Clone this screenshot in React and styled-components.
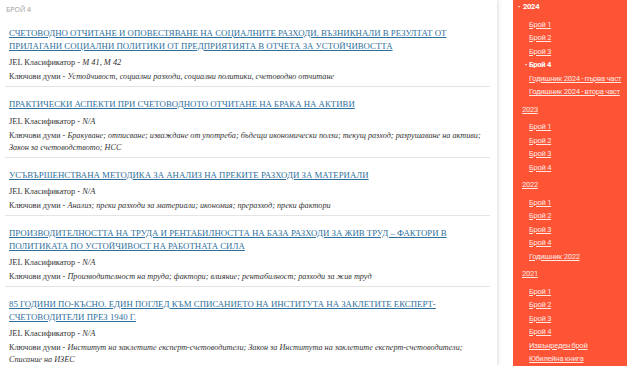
import styled, { createGlobalStyle } from 'styled-components';

const GlobalStyle = createGlobalStyle`
  html, body {
    margin: 0;
    padding: 0;
    background: #ffffff;
  }
`;

const articles = [
  {
    title:
      'Счетоводно отчитане и оповестяване на социалните разходи, възникнали в резултат от прилагани социални политики от предприятията в отчета за устойчивостта',
    jel: 'M 41, M 42',
    keywords: 'Устойчивост, социални разходи, социални политики, счетоводно отчитане',
  },
  {
    title: 'Практически аспекти при счетоводното отчитане на брака на активи',
    jel: 'N/A',
    keywords:
      'Бракуване; отписване; изваждане от употреба; бъдещи икономически ползи; текущ разход; разрушаване на активи; Закон за счетоводството; НСС',
  },
  {
    title: 'Усъвършенствана методика за анализ на преките разходи за материали',
    jel: 'N/A',
    keywords: 'Анализ; преки разходи за материали; икономия; преразход; преки фактори',
  },
  {
    title:
      'Производителността на труда и рентабилността на база разходи за жив труд – фактори в политиката по устойчивост на работната сила',
    jel: 'N/A',
    keywords: 'Производителност на труда; фактори; влияние; рентабилност; разходи за жив труд',
  },
  {
    title:
      '85 години по-късно. Един поглед към списанието на Института на заклетите експерт-счетоводители през 1940 г.',
    jel: 'N/A',
    keywords:
      'Институт на заклетите експерт-счетоводители; Закон за Института на заклетите експерт-счетоводители; Списание на ИЗЕС',
  },
];

const years = [
  {
    year: '2024',
    active: true,
    items: [
      { label: 'Брой 1' },
      { label: 'Брой 2' },
      { label: 'Брой 3' },
      { label: 'Брой 4', active: true },
      { label: 'Годишник 2024 - първа част' },
      { label: 'Годишник 2024 - втора част' },
    ],
  },
  {
    year: '2023',
    items: [{ label: 'Брой 1' }, { label: 'Брой 2' }, { label: 'Брой 3' }, { label: 'Брой 4' }],
  },
  {
    year: '2022',
    items: [
      { label: 'Брой 1' },
      { label: 'Брой 2' },
      { label: 'Брой 3' },
      { label: 'Брой 4' },
      { label: 'Годишник 2022' },
    ],
  },
  {
    year: '2021',
    items: [
      { label: 'Брой 1' },
      { label: 'Брой 2' },
      { label: 'Брой 3' },
      { label: 'Брой 4' },
      { label: 'Извънреден брой' },
      { label: 'Юбилейна книга' },
    ],
  },
];

const Page = styled.div`
  display: flex;
  width: 627px;
  height: 366px;
  overflow: hidden;
`;

const Main = styled.main`
  width: 513px;
  flex-shrink: 0;
`;

const Card = styled.div`
  width: 497px;
  height: 366px;
  box-shadow: 1px 0 4px rgba(0, 0, 0, 0.14);
  background: #fff;
`;

const IssueLabel = styled.div`
  font-family: 'Open Sans', sans-serif;
  font-size: 7px;
  color: #9a9a9a;
  text-transform: uppercase;
  padding: 5px 0 0 6px;
  line-height: 9px;
`;

const ArticleList = styled.div`
  padding-top: 13px;
`;

const Article = styled.article`
  margin: 0 7px 0 5px;
  padding: 11px 4px 3px 4px;
  border-bottom: 1px solid #e4e4e4;
  font-family: 'Liberation Serif', serif;
  color: #333;

  &:first-child {
    padding-top: 0;
  }
`;

const Title = styled.a`
  display: block;
  font-size: 8.8px;
  line-height: 12.5px;
  text-transform: uppercase;
  color: #2f6f9c;
  text-decoration: underline;
  margin-bottom: 4px;
`;

const Meta = styled.div`
  font-size: 8.4px;
  line-height: 14px;
`;

const Keywords = styled.div`
  font-size: 8.2px;
  line-height: 12px;
  margin-top: 1px;

  em {
    font-style: italic;
  }
`;

const Sidebar = styled.aside`
  flex: 1;
  background: #fd5435;
  padding: 0 0 0 9px;
  font-family: Roboto, sans-serif;
  font-size: 7.6px;
  letter-spacing: -0.3px;
  color: #ffe6e0;
`;

const YearBlock = styled.div``;

const YearTitle = styled.div`
  position: relative;
  line-height: 13.5px;
  font-weight: ${(p) => (p.$active ? 700 : 400)};
  color: ${(p) => (p.$active ? '#fff' : '#ffe6e0')};
  text-decoration: ${(p) => (p.$active ? 'none' : 'underline')};
  padding-left: ${(p) => (p.$active ? '1px' : '0')};

  &::before {
    content: ${(p) => (p.$active ? "'•'" : 'none')};
    position: absolute;
    left: -4px;
    font-size: 6px;
  }
`;

const ItemList = styled.ul`
  list-style: none;
  margin: 4px 0;
  padding: 0 0 0 7px;
`;

const Item = styled.li`
  position: relative;
  line-height: 13.5px;
  white-space: nowrap;
  font-weight: ${(p) => (p.$active ? 700 : 400)};
  color: ${(p) => (p.$active ? '#fff' : '#ffe6e0')};
  text-decoration: ${(p) => (p.$active ? 'none' : 'underline')};

  &::before {
    content: ${(p) => (p.$active ? "'•'" : 'none')};
    position: absolute;
    left: -4px;
    font-size: 6px;
  }
`;

function App() {
  return (
    <Page>
      <GlobalStyle />
      <Main>
        <Card>
          <IssueLabel>Брой 4</IssueLabel>
          <ArticleList>
            {articles.map((a) => (
              <Article key={a.title}>
                <Title href="#">{a.title}</Title>
                <Meta>
                  JEL Класификатор - <em>{a.jel}</em>
                </Meta>
                <Keywords>
                  Ключови думи - <em>{a.keywords}</em>
                </Keywords>
              </Article>
            ))}
          </ArticleList>
        </Card>
      </Main>
      <Sidebar>
        {years.map((y) => (
          <YearBlock key={y.year}>
            <YearTitle $active={y.active}>{y.year}</YearTitle>
            <ItemList>
              {y.items.map((it) => (
                <Item key={it.label} $active={it.active}>
                  {it.label}
                </Item>
              ))}
            </ItemList>
          </YearBlock>
        ))}
      </Sidebar>
    </Page>
  );
}

export default App;
